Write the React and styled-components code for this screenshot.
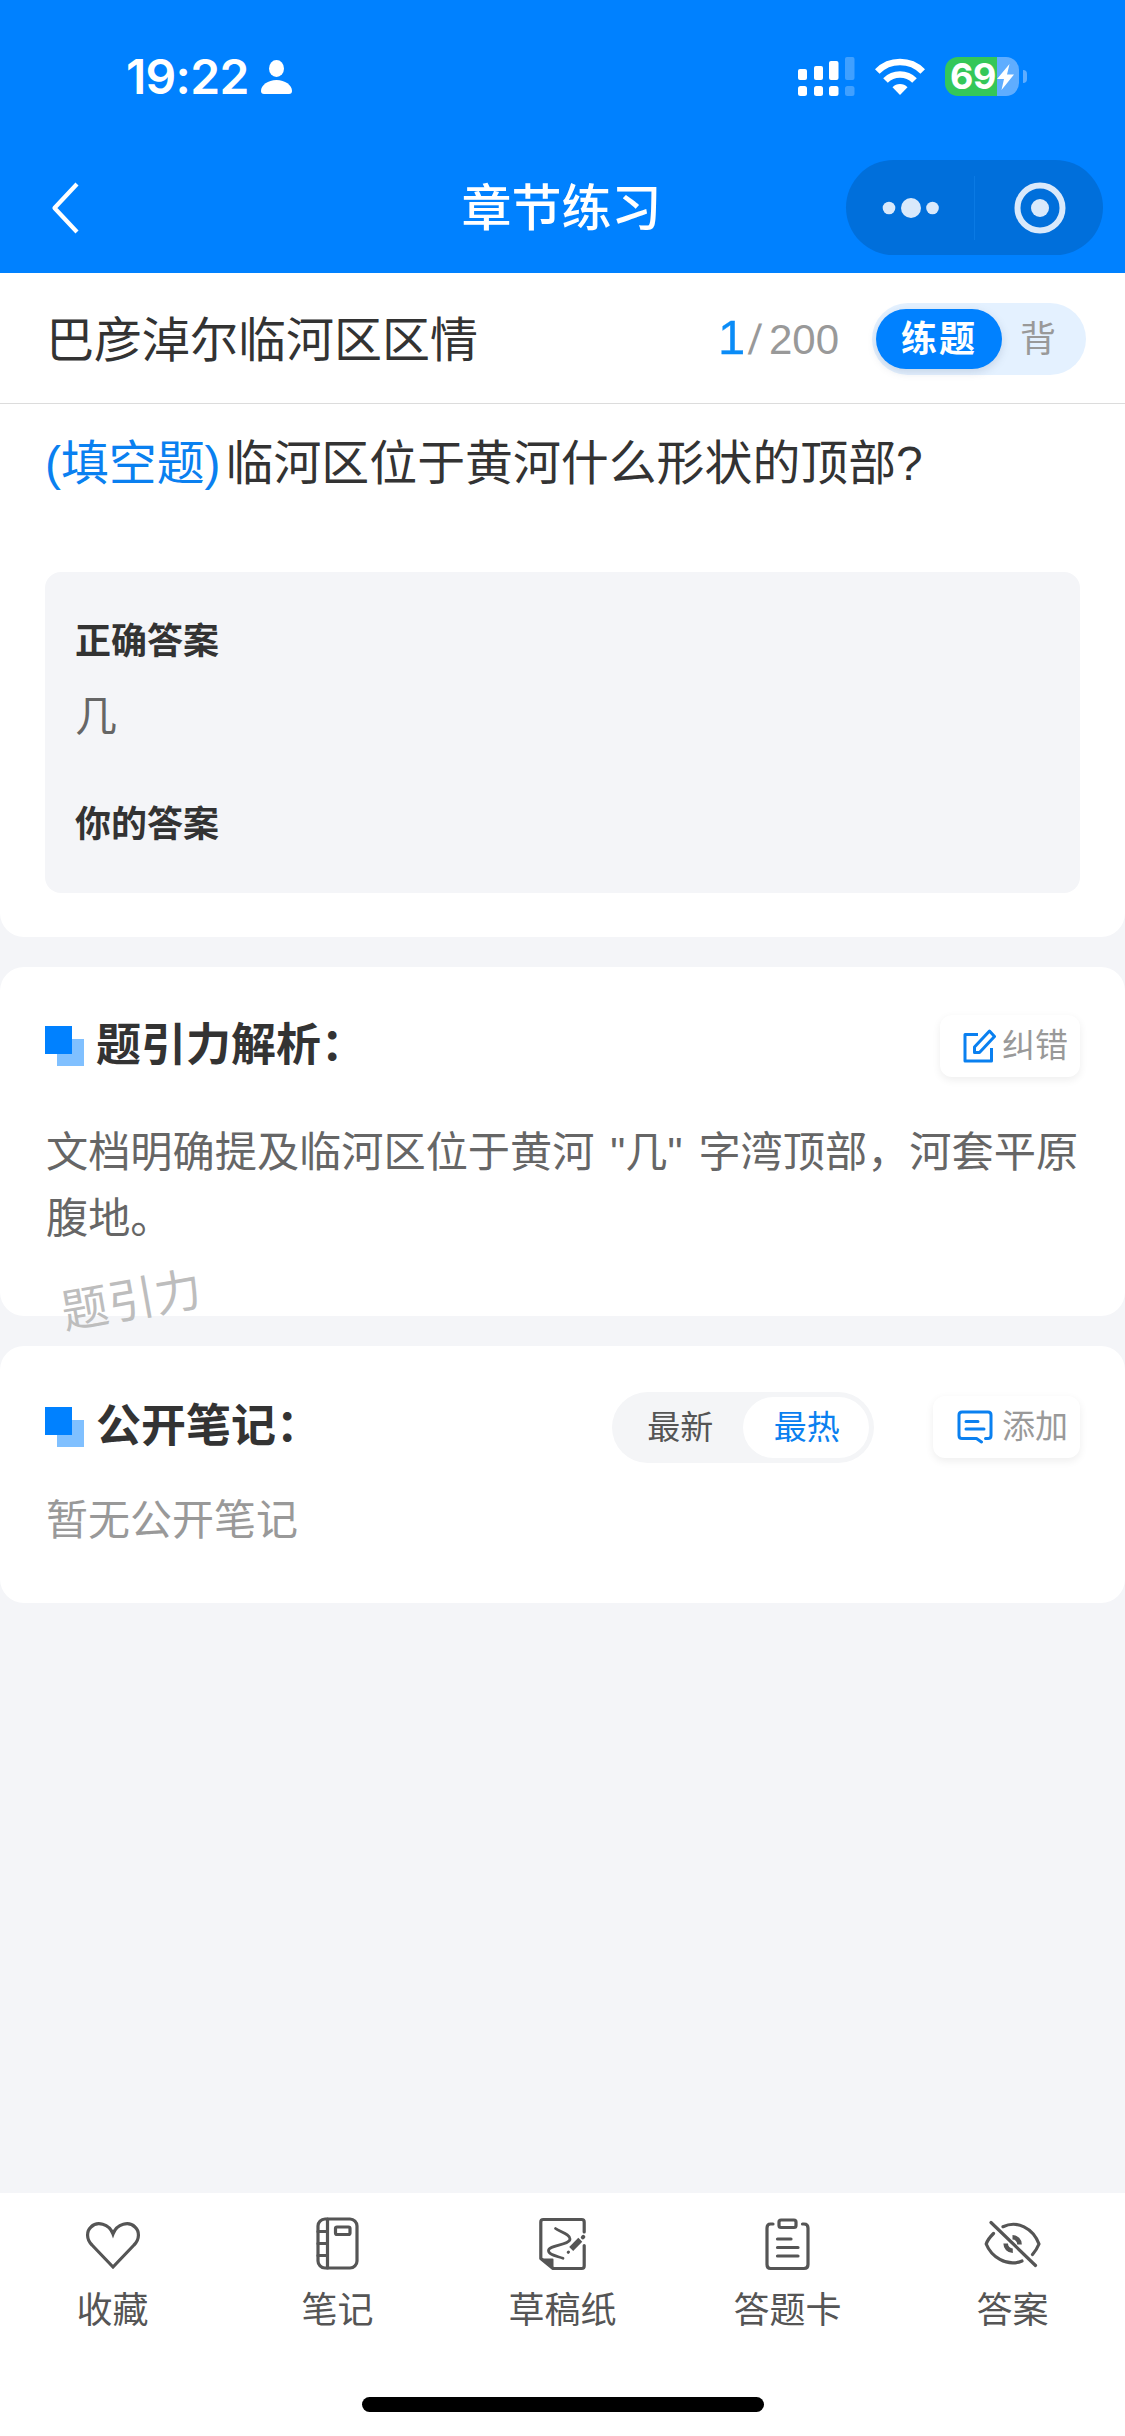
import React from "react";
import styled, { createGlobalStyle } from "styled-components";

const GlobalStyle = createGlobalStyle`
  * { box-sizing: border-box; }
  body {
    margin: 0;
    background: #f4f5f8;
    font-family: "Liberation Sans", "Noto Sans CJK SC", sans-serif;
  }
`;

const Screen = styled.div`
  width: 1125px;
  height: 2436px;
  display: flex;
  flex-direction: column;
  background: #f4f5f8;
  overflow: hidden;
`;

const Header = styled.header`
  height: 273px;
  flex: none;
  background: #0081ff;
  color: #fff;
  display: flex;
  flex-direction: column;
`;

const StatusBar = styled.div`
  height: 140px;
  padding: 13px 98px 0 126px;
  display: flex;
  align-items: center;
  justify-content: space-between;
`;

const StatusGroup = styled.div`
  display: flex;
  align-items: center;
  gap: ${(p) => p.$gap}px;
`;

const Clock = styled.span`
  width: 121px;
  font: 600 48px/60px Inter, sans-serif;
  letter-spacing: -0.7px;
  white-space: nowrap;
`;

const Battery = styled.div`
  display: flex;
  align-items: center;
  gap: 4px;
`;

const BatteryBody = styled.div`
  width: 74px;
  height: 39px;
  border-radius: 13px;
  padding-left: 5px;
  display: flex;
  align-items: center;
  gap: 1px;
  background: linear-gradient(to right, #34c759 52px, #5fadff 52px);
  font: 700 36px/39px Inter, sans-serif;
  letter-spacing: -0.5px;
`;

const BatteryTip = styled.div`
  width: 4px;
  height: 13px;
  border-radius: 0 4px 4px 0;
  background: #5fadff;
`;

const NavBar = styled.div`
  height: 133px;
  padding: 2px 22px 0 50px;
  display: grid;
  grid-template-columns: 257px 1fr 257px;
  align-items: center;
`;

const NavTitle = styled.h1`
  margin: 3px 0 0 -30px;
  text-align: center;
  font-size: 50px;
  line-height: 64px;
  font-weight: 500;
`;

const Capsule = styled.div`
  width: 257px;
  height: 95px;
  border-radius: 48px;
  background: #006fdb;
  display: grid;
  grid-template-columns: 1fr 1px 1fr;
  align-items: center;
  justify-items: center;
`;

const CapsuleDivider = styled.div`
  width: 1px;
  height: 64px;
  background: #0a7ae4;
`;

const Body = styled.main`
  flex: 1;
  display: flex;
  flex-direction: column;
  gap: 30px;
`;

const Card = styled.section`
  position: relative;
  height: ${(p) => p.$h}px;
  background: #fff;
  border-radius: ${(p) => (p.$first ? "0 0 24px 24px" : "24px")};
  padding: ${(p) => p.$top || 0}px 45px 0;
`;

const TopicBar = styled.div`
  height: 131px;
  margin: 0 -45px;
  padding: 1px 39px 0 46px;
  border-bottom: 1px solid #dcdcdc;
  display: flex;
  align-items: center;
`;

const TopicName = styled.div`
  flex: 1;
  padding-top: 4px;
  font-size: 48px;
  line-height: 60px;
  color: #333;
`;

const Progress = styled.div`
  display: flex;
  align-items: baseline;
  margin-right: 33px;
  font-size: 42px;
  line-height: 60px;
  color: #999;
`;

const Current = styled.span`
  font-size: 49px;
  color: #0a8cf7;
  -webkit-text-stroke: 0.3px #0a8cf7;
  margin-right: 4px;
`;

const Slash = styled.span`
  display: inline-block;
  margin-right: 8px;
  transform: skewX(-5deg);
`;

const ModeSwitch = styled.div`
  width: 214px;
  height: 72px;
  padding: 0 4px;
  border-radius: 36px;
  background: #e4f1ff;
  display: flex;
  align-items: center;
`;

const ModeOption = styled.div`
  width: ${(p) => (p.$active ? 126 : 72)}px;
  height: 60px;
  border-radius: 30px;
  font-size: 36px;
  line-height: 62px;
  text-align: center;
  color: ${(p) => (p.$active ? "#fff" : "#999")};
  font-weight: ${(p) => (p.$active ? 700 : 400)};
  letter-spacing: ${(p) => (p.$active ? 2 : 0)}px;
  background: ${(p) => (p.$active ? "#0081ff" : "transparent")};
  box-shadow: ${(p) => (p.$active ? "0 3px 9px rgba(90,110,140,.22)" : "none")};
`;

const Question = styled.p`
  margin: 24px 0 0;
  font-size: 47.9px;
  line-height: 72px;
  color: #333;
`;

const QuestionType = styled.span`
  color: #0a80f0;
  margin-right: 5px;
`;

const AnswerBox = styled.div`
  margin-top: 72px;
  height: 321px;
  border-radius: 16px;
  background: #f4f5f8;
  padding: 40px 30px;
`;

const AnswerLabel = styled.div`
  font-size: 36px;
  line-height: 60px;
  font-weight: 700;
  color: #333;
`;

const AnswerText = styled.div`
  height: 123px;
  padding-top: 15px;
  font-size: 42px;
  line-height: 60px;
  color: #666;
`;

const SectionHead = styled.div`
  height: 62px;
  display: flex;
  align-items: center;
`;

const SectionTitle = styled.h2`
  margin: 0 0 0 12px;
  flex: 1;
  font-size: 45px;
  line-height: 62px;
  font-weight: 700;
  color: #333;
`;

const ActionButton = styled.button`
  height: 62px;
  width: ${(p) => p.$w}px;
  padding: 0 12px 0 0;
  border: 0;
  border-radius: 12px;
  background: #fff;
  box-shadow: 0 3px 9px rgba(0, 0, 0, 0.07);
  display: flex;
  align-items: center;
  justify-content: flex-end;
  gap: ${(p) => p.$gap}px;
  font-family: inherit;
  font-size: 33px;
  line-height: 60px;
  color: #999;
`;

const SortSwitch = styled.div`
  width: 262px;
  height: 71px;
  margin-right: 59px;
  padding: 0 5px 0 4px;
  border-radius: 36px;
  background: #f4f5f7;
  display: flex;
  align-items: center;
`;

const SortOption = styled.div`
  width: 127px;
  height: 61px;
  border-radius: 31px;
  padding-left: 2px;
  font-size: 33px;
  line-height: 62px;
  text-align: center;
  color: ${(p) => (p.$active ? "#0a80f0" : "#555")};
  background: ${(p) => (p.$active ? "#fff" : "transparent")};
`;

const Analysis = styled.p`
  margin: 43px 0 0 1px;
  font-size: 42.2px;
  line-height: 66px;
  color: #666;
  word-spacing: 4.2px;
  white-space: nowrap;
`;

const Watermark = styled.span`
  position: absolute;
  left: 61px;
  top: 298px;
  font-size: 47px;
  line-height: 72px;
  color: #bdbdbd;
  transform: rotate(-10deg);
`;

const EmptyNote = styled.p`
  margin: 32px 0 0 1px;
  font-size: 42px;
  line-height: 62px;
  color: #999;
`;

const Footer = styled.footer`
  height: 243px;
  flex: none;
  background: #fff;
  display: flex;
  flex-direction: column;
  align-items: center;
`;

const TabList = styled.nav`
  width: 100%;
  height: 204px;
  padding-top: 21px;
  display: grid;
  grid-template-columns: repeat(5, 1fr);
`;

const Tab = styled.div`
  display: flex;
  flex-direction: column;
  align-items: center;
  gap: 7px;
  font-size: 36px;
  line-height: 60px;
  color: #555;
`;

const HomeIndicator = styled.div`
  width: 402px;
  height: 15px;
  border-radius: 8px;
  background: #000;
`;

const PersonIcon = () => (
  <svg width="31" height="34" viewBox="0 0 31 34" fill="#fff">
    <ellipse cx="15.5" cy="8.5" rx="7.5" ry="8.5" />
    <path d="M3 34C1 34 0 33 0 31C0 25 7 20 15.500 20S31 25 31 31C31 33 30 34 28 34Z" />
  </svg>
);

const SignalIcon = () => (
  <svg width="57" height="40" viewBox="0 0 57 40" fill="#fff">
    <rect x="0" y="12" width="9" height="11" rx="2" />
    <rect x="16" y="9" width="9" height="14" rx="2" />
    <rect x="31" y="4" width="9.500" height="19" rx="2" />
    <rect x="0" y="29" width="9" height="10" rx="2.500" />
    <rect x="16" y="29" width="9" height="10" rx="2.500" />
    <rect x="31" y="29" width="9.500" height="10" rx="2.500" />
    <g opacity=".25">
      <rect x="47" y="0" width="9.500" height="23" rx="2" />
      <rect x="47" y="29" width="9.500" height="10" rx="2.500" />
    </g>
  </svg>
);

const WifiIcon = () => (
  <svg width="50" height="37" viewBox="0 0 50 37" fill="none" stroke="#fff" strokeWidth="6.500">
    <path d="M2.300 13.500A32 32 0 0 1 47.700 13.500" />
    <path d="M10.500 22.500A20.500 20.500 0 0 1 39.500 22.500" />
    <path d="M25 37L17.500 29.200A10.500 10.500 0 0 1 32.500 29.200Z" fill="#fff" stroke="none" />
  </svg>
);

const BoltIcon = () => (
  <svg width="17" height="26" viewBox="0 0 17 26" fill="#fff">
    <path d="M12.500 0L0 15H7L4.500 26L17 10.500H10Z" />
  </svg>
);

const BackIcon = () => (
  <svg width="30" height="52" viewBox="0 0 30 52" fill="none" stroke="#fff" strokeWidth="4.200">
    <path d="M27 2L4.500 26L27 50" strokeLinejoin="round" />
  </svg>
);

const MoreIcon = () => (
  <svg width="58" height="24" viewBox="0 0 58 24" fill="#d9e9fb">
    <circle cx="8" cy="12" r="6.300" />
    <circle cx="30" cy="12" r="10" />
    <circle cx="51.500" cy="12" r="6.300" />
  </svg>
);

const TargetIcon = () => (
  <svg width="54" height="52" viewBox="0 0 54 52">
    <circle cx="28" cy="26" r="22.500" fill="none" stroke="#d9e9fb" strokeWidth="6" />
    <circle cx="28" cy="26" r="9" fill="#d9e9fb" />
  </svg>
);

const SectionMark = () => (
  <svg width="39" height="40" viewBox="0 0 39 40">
    <rect x="12" y="13" width="27" height="27" fill="#80c0ff" />
    <rect x="0" y="0" width="27" height="28" fill="#0081ff" />
  </svg>
);

const EditIcon = () => (
  <svg width="33" height="34" viewBox="0 0 33 34" fill="none" stroke="#0a80f0" strokeWidth="3" strokeLinejoin="round">
    <path d="M15 5.500H2V32H28.500V19" />
    <path d="M26.500 2L31.500 7.500L16.500 23.500H11.500V18Z" />
  </svg>
);

const NoteIcon = () => (
  <svg width="36" height="34" viewBox="0 0 36 34" fill="none" stroke="#0a80f0" strokeWidth="3" strokeLinecap="round" strokeLinejoin="round">
    <path d="M28.500 28.500H31Q34 28.500 34 25.500V5Q34 2 31 2H5Q2 2 2 5V25.500Q2 28.500 5 28.500H19.500L24.500 32" />
    <path d="M9 11.500H21M9 19H27" />
  </svg>
);

const TabIcon = ({ children }) => (
  <svg width="60" height="60" viewBox="0 0 60 60" fill="none" stroke="#555" strokeWidth="3.200" strokeLinecap="round" strokeLinejoin="round">
    {children}
  </svg>
);

const HeartIcon = () => (
  <TabIcon>
    <path d="M30 53L9 31C3 25 3.500 17 8 13C14 7 26 9.500 30 20C34 9.500 46 7 52 13C56.500 17 57 25 51 31Z" strokeLinejoin="miter" />
  </TabIcon>
);

const NotebookIcon = () => (
  <TabIcon>
    <rect x="10" y="5" width="39" height="49" rx="7" />
    <path d="M19.500 5V54M10 17.500H19M10 29.500H19M10 41.500H19" />
    <rect x="27.500" y="13" width="14.500" height="7.500" rx="1.500" />
  </TabIcon>
);

const DraftIcon = () => (
  <TabIcon>
    <path d="M51.200 18V8Q51.200 5.500 48.700 5.500H10.300Q7.800 5.500 7.800 8V44.500L20 54.500H48.700Q51.200 54.500 51.200 52V31.500" />
    <path d="M9.500 45.500H19.500V53.500Z" fill="#555" strokeWidth="2" />
    <path d="M22.500 14.500C27 18 37 20 37 25C37 31 15.500 31 15.500 36.500C15.500 41 24 42 30 44.300" strokeWidth="2.800" />
    <path d="M38.200 34.900L47.300 25.800" strokeWidth="5.600" strokeLinecap="butt" />
    <path d="M49.800 23.300L50.300 22.800" strokeWidth="4" />
    <path d="M35.200 38.300L35.500 38" strokeWidth="3" />
  </TabIcon>
);

const ClipboardIcon = () => (
  <TabIcon>
    <path d="M15 10H12.500Q9 10 9 14V50.500Q9 54.500 12.500 54.500H46Q50 54.500 50 50.500V14Q50 10 46 10H44.500" />
    <rect x="21" y="6" width="17" height="7.500" rx="2" />
    <path d="M19.500 25H33M19.500 33.500H40M19.500 42H40" />
  </TabIcon>
);

const EyeOffIcon = () => (
  <TabIcon>
    <path d="M10.500 19.500Q4.500 25.500 3.200 30C8 42 23 53.500 39 47" />
    <path d="M20 12.700C34 6 50 14 56 30Q53.500 36 49.500 40.500" />
    <path d="M8 8.500L52.500 51.500" />
    <path d="M29.500 23.300A7 7 0 0 1 36.500 30.500M22.700 29.500A7 7 0 0 0 29.800 36.700" strokeWidth="4.600" strokeLinecap="butt" />
  </TabIcon>
);

const tabs = [
  { label: "收藏", Icon: HeartIcon },
  { label: "笔记", Icon: NotebookIcon },
  { label: "草稿纸", Icon: DraftIcon },
  { label: "答题卡", Icon: ClipboardIcon },
  { label: "答案", Icon: EyeOffIcon },
];

export default function App() {
  return (
    <>
      <GlobalStyle />
      <Screen>
        <Header>
          <StatusBar>
            <StatusGroup $gap={14}>
              <Clock>19:22</Clock>
              <PersonIcon />
            </StatusGroup>
            <StatusGroup $gap={20}>
              <SignalIcon />
              <WifiIcon />
              <Battery>
                <BatteryBody>
                  69
                  <BoltIcon />
                </BatteryBody>
                <BatteryTip />
              </Battery>
            </StatusGroup>
          </StatusBar>
          <NavBar>
            <BackIcon />
            <NavTitle>章节练习</NavTitle>
            <Capsule>
              <MoreIcon />
              <CapsuleDivider />
              <TargetIcon />
            </Capsule>
          </NavBar>
        </Header>

        <Body>
          <Card $h={664} $first>
            <TopicBar>
              <TopicName>巴彦淖尔临河区区情</TopicName>
              <Progress>
                <Current>1</Current>
                <Slash>/</Slash>
                <span>200</span>
              </Progress>
              <ModeSwitch>
                <ModeOption $active>练题</ModeOption>
                <ModeOption>背</ModeOption>
              </ModeSwitch>
            </TopicBar>
            <Question>
              <QuestionType>(填空题)</QuestionType>
              临河区位于黄河什么形状的顶部?
            </Question>
            <AnswerBox>
              <AnswerLabel>正确答案</AnswerLabel>
              <AnswerText>几</AnswerText>
              <AnswerLabel>你的答案</AnswerLabel>
            </AnswerBox>
          </Card>

          <Card $h={349} $top={48}>
            <SectionHead>
              <SectionMark />
              <SectionTitle>题引力解析：</SectionTitle>
              <ActionButton $w={140} $gap={6}>
                <EditIcon />
                纠错
              </ActionButton>
            </SectionHead>
            <Analysis>
              文档明确提及临河区位于黄河 "几" 字湾顶部，河套平原
              <br />
              腹地。
            </Analysis>
            <Watermark>题引力</Watermark>
          </Card>

          <Card $h={257} $top={50}>
            <SectionHead>
              <SectionMark />
              <SectionTitle>公开笔记：</SectionTitle>
              <SortSwitch>
                <SortOption>最新</SortOption>
                <SortOption $active>最热</SortOption>
              </SortSwitch>
              <ActionButton $w={147} $gap={9}>
                <NoteIcon />
                添加
              </ActionButton>
            </SectionHead>
            <EmptyNote>暂无公开笔记</EmptyNote>
          </Card>
        </Body>

        <Footer>
          <TabList>
            {tabs.map(({ label, Icon }) => (
              <Tab key={label}>
                <Icon />
                {label}
              </Tab>
            ))}
          </TabList>
          <HomeIndicator />
        </Footer>
      </Screen>
    </>
  );
}
